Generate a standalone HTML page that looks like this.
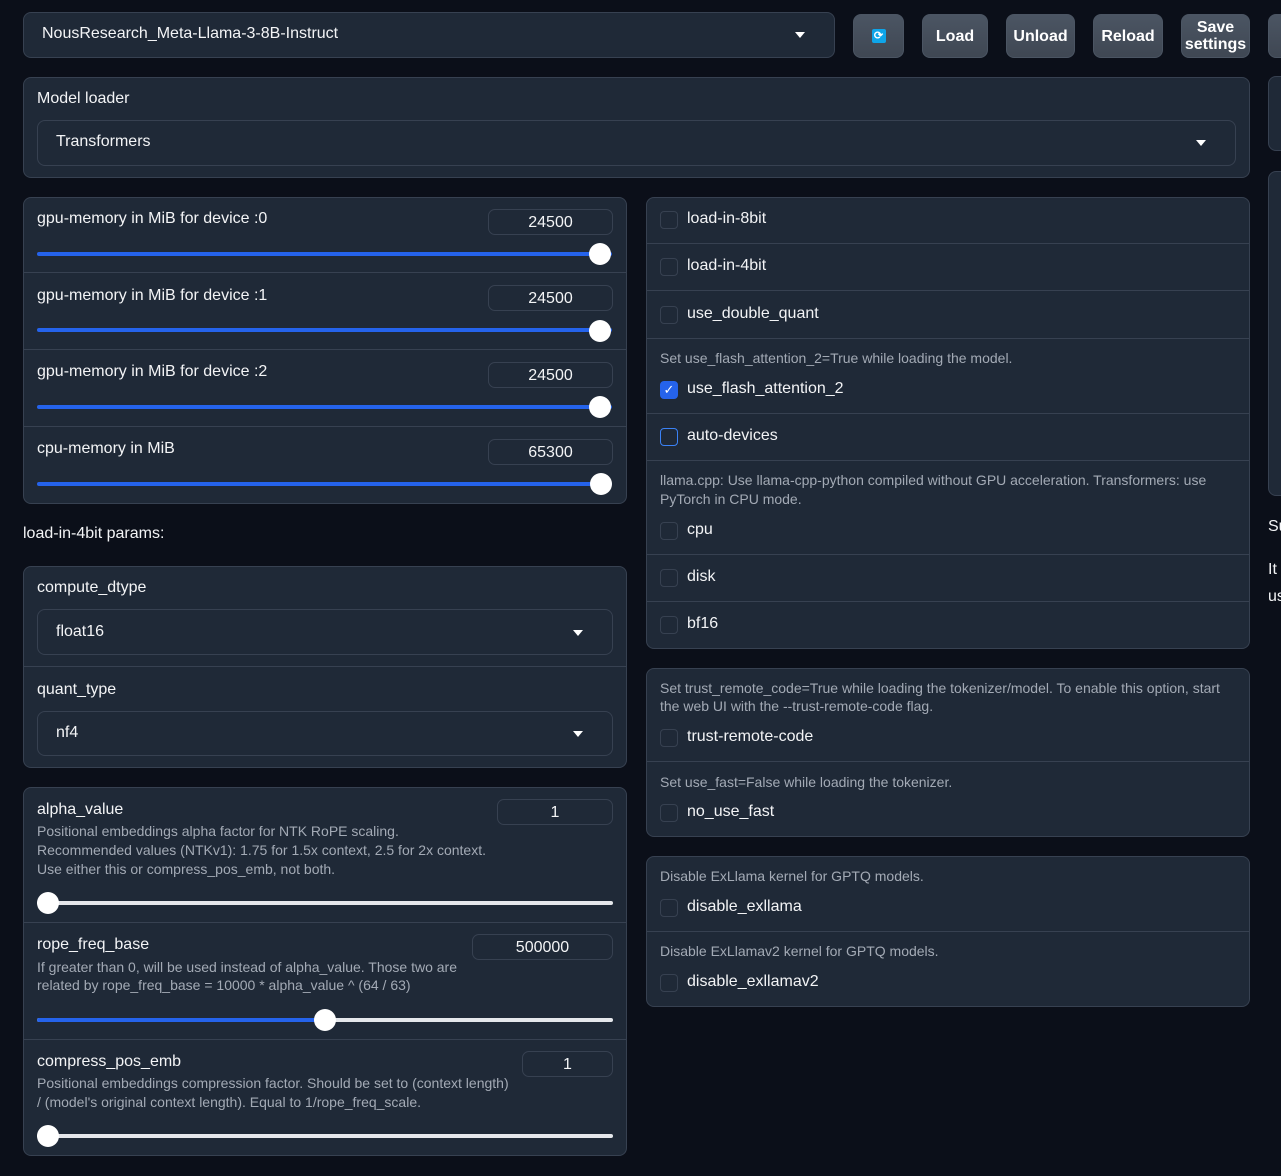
<!DOCTYPE html>
<html><head><meta charset="utf-8"><style>
*{box-sizing:border-box;margin:0;padding:0}
body{width:1281px;height:1176px;background:#0b0f19;position:relative;overflow:hidden;font-family:"Liberation Sans",sans-serif;color:#f3f4f6}
.a{position:absolute}
.p{position:absolute;background:#1f2937;border:1px solid #374151;border-radius:8px}
.in{position:absolute;background:#1f2937;border:1px solid #374151;border-radius:8px}
.t{position:absolute;white-space:nowrap;line-height:20px;font-size:16px;color:#f3f4f6}
.s{position:absolute;white-space:nowrap;line-height:19px;font-size:14px;color:#a3aab5}
.hr{position:absolute;height:1px;background:#374151}
.btn{position:absolute;top:14px;height:44px;border-radius:8px;background:linear-gradient(#4b5563,#3f4753);border:1px solid #4b5563;color:#fff;font-weight:bold;font-size:16px;display:flex;align-items:center;justify-content:center;text-align:center;line-height:17px}
.arr{position:absolute;width:0;height:0;border-left:5px solid transparent;border-right:5px solid transparent;border-top:6px solid #fff}
.cb{position:absolute;left:660px;width:18px;height:18px;border:1px solid #374151;border-radius:4px;background:#1f2937}
.num{position:absolute;border:1px solid #374151;border-radius:7px;height:26px;font-size:16px;text-align:center;line-height:26px;color:#f3f4f6}
.tr{position:absolute;height:4px;border-radius:2px;background:#e5e7eb}
.tb{position:absolute;height:4px;border-radius:2px;background:#2563eb}
.th{position:absolute;width:22px;height:22px;border-radius:50%;background:#fff}
</style></head><body>
<!-- top -->
<div class="in" style="left:23px;top:12px;width:812px;height:46px"></div>
<div class="t" style="left:42px;top:24px">NousResearch_Meta-Llama-3-8B-Instruct</div>
<div class="arr" style="left:795px;top:32px"></div>
<div class="btn" style="left:853px;width:51px"><div style="width:14px;height:14px;background:#0ea5e9;border-radius:2px;color:#fff;font-size:11px;line-height:14px">⟳</div></div>
<div class="btn" style="left:922px;width:66px">Load</div>
<div class="btn" style="left:1006px;width:69px">Unload</div>
<div class="btn" style="left:1093px;width:70px">Reload</div>
<div class="btn" style="left:1181px;width:69px">Save<br>settings</div>
<div class="btn" style="left:1268px;width:40px"></div>
<!-- right partial column -->
<div class="p" style="left:1268px;top:76px;width:40px;height:75px"></div>
<div class="p" style="left:1268px;top:171px;width:40px;height:325px"></div>
<div class="t" style="left:1268px;top:517px">Su</div>
<div class="t" style="left:1268px;top:560px">It</div>
<div class="t" style="left:1268px;top:587px">us</div>
<!-- model loader -->
<div class="p" style="left:23px;top:77px;width:1227px;height:101px"></div>
<div class="t" style="left:37px;top:89px">Model loader</div>
<div class="in" style="left:37px;top:120px;width:1199px;height:46px"></div>
<div class="t" style="left:56px;top:132px">Transformers</div>
<div class="arr" style="left:1196px;top:140px"></div>
<!-- memory sliders -->
<div class="p" style="left:23px;top:197px;width:604px;height:307px"></div>
<div class="hr" style="left:24px;top:272px;width:602px"></div>
<div class="hr" style="left:24px;top:349px;width:602px"></div>
<div class="hr" style="left:24px;top:426px;width:602px"></div>
<div class="t" style="left:37px;top:209px">gpu-memory in MiB for device :0</div>
<div class="num" style="left:488px;top:209px;width:125px">24500</div>
<div class="tb" style="left:37px;top:252px;width:575px"></div><div class="th" style="left:589px;top:243px"></div>
<div class="t" style="left:37px;top:286px">gpu-memory in MiB for device :1</div>
<div class="num" style="left:488px;top:285px;width:125px">24500</div>
<div class="tb" style="left:37px;top:328px;width:575px"></div><div class="th" style="left:589px;top:320px"></div>
<div class="t" style="left:37px;top:362px">gpu-memory in MiB for device :2</div>
<div class="num" style="left:488px;top:362px;width:125px">24500</div>
<div class="tb" style="left:37px;top:405px;width:575px"></div><div class="th" style="left:589px;top:396px"></div>
<div class="t" style="left:37px;top:439px">cpu-memory in MiB</div>
<div class="num" style="left:488px;top:439px;width:125px">65300</div>
<div class="tb" style="left:37px;top:482px;width:575px"></div><div class="th" style="left:590px;top:473px"></div>
<div class="t" style="left:23px;top:524px">load-in-4bit params:</div>
<!-- compute -->
<div class="p" style="left:23px;top:566px;width:604px;height:202px"></div>
<div class="t" style="left:37px;top:578px">compute_dtype</div>
<div class="in" style="left:37px;top:609px;width:576px;height:46px"></div>
<div class="t" style="left:56px;top:622px">float16</div>
<div class="arr" style="left:573px;top:630px"></div>
<div class="hr" style="left:24px;top:666px;width:602px"></div>
<div class="t" style="left:37px;top:680px">quant_type</div>
<div class="in" style="left:37px;top:711px;width:576px;height:45px"></div>
<div class="t" style="left:56px;top:723px">nf4</div>
<div class="arr" style="left:573px;top:731px"></div>
<!-- alpha -->
<div class="p" style="left:23px;top:787px;width:604px;height:369px"></div>
<div class="t" style="left:37px;top:800px">alpha_value</div>
<div class="num" style="left:497px;top:799px;width:116px">1</div>
<div class="s" style="left:37px;top:822px">Positional embeddings alpha factor for NTK RoPE scaling.</div>
<div class="s" style="left:37px;top:841px">Recommended values (NTKv1): 1.75 for 1.5x context, 2.5 for 2x context.</div>
<div class="s" style="left:37px;top:860px">Use either this or compress_pos_emb, not both.</div>
<div class="tr" style="left:37px;top:901px;width:576px"></div><div class="th" style="left:37px;top:892px"></div>
<div class="hr" style="left:24px;top:922px;width:602px"></div>
<div class="t" style="left:37px;top:935px">rope_freq_base</div>
<div class="num" style="left:472px;top:934px;width:141px">500000</div>
<div class="s" style="left:37px;top:958px">If greater than 0, will be used instead of alpha_value. Those two are</div>
<div class="s" style="left:37px;top:976px">related by rope_freq_base = 10000 * alpha_value ^ (64 / 63)</div>
<div class="tr" style="left:37px;top:1018px;width:576px"></div>
<div class="tb" style="left:37px;top:1018px;width:290px"></div><div class="th" style="left:314px;top:1009px"></div>
<div class="hr" style="left:24px;top:1039px;width:602px"></div>
<div class="t" style="left:37px;top:1052px">compress_pos_emb</div>
<div class="num" style="left:522px;top:1051px;width:91px">1</div>
<div class="s" style="left:37px;top:1074px">Positional embeddings compression factor. Should be set to (context length)</div>
<div class="s" style="left:37px;top:1093px">/ (model's original context length). Equal to 1/rope_freq_scale.</div>
<div class="tr" style="left:37px;top:1134px;width:576px"></div><div class="th" style="left:37px;top:1125px"></div>
<!-- checkbox panel -->
<div class="p" style="left:646px;top:197px;width:604px;height:452px"></div>
<div class="hr" style="left:647px;top:243px;width:602px"></div>
<div class="hr" style="left:647px;top:290px;width:602px"></div>
<div class="hr" style="left:647px;top:338px;width:602px"></div>
<div class="hr" style="left:647px;top:413px;width:602px"></div>
<div class="hr" style="left:647px;top:460px;width:602px"></div>
<div class="hr" style="left:647px;top:554px;width:602px"></div>
<div class="hr" style="left:647px;top:601px;width:602px"></div>
<div class="cb" style="top:211px"></div><div class="t" style="left:687px;top:209px">load-in-8bit</div>
<div class="cb" style="top:258px"></div><div class="t" style="left:687px;top:256px">load-in-4bit</div>
<div class="cb" style="top:306px"></div><div class="t" style="left:687px;top:304px">use_double_quant</div>
<div class="s" style="left:660px;top:349px">Set use_flash_attention_2=True while loading the model.</div>
<div class="cb" style="top:381px;background:#2563eb;border-color:#2563eb;color:#fff;font-size:13px;line-height:16px;text-align:center">✓</div><div class="t" style="left:687px;top:379px">use_flash_attention_2</div>
<div class="cb" style="top:428px;border-color:#3b82f6"></div><div class="t" style="left:687px;top:426px">auto-devices</div>
<div class="s" style="left:660px;top:471px">llama.cpp: Use llama-cpp-python compiled without GPU acceleration. Transformers: use</div>
<div class="s" style="left:660px;top:490px">PyTorch in CPU mode.</div>
<div class="cb" style="top:522px"></div><div class="t" style="left:687px;top:520px">cpu</div>
<div class="cb" style="top:569px"></div><div class="t" style="left:687px;top:567px">disk</div>
<div class="cb" style="top:616px"></div><div class="t" style="left:687px;top:614px">bf16</div>
<!-- trust panel -->
<div class="p" style="left:646px;top:668px;width:604px;height:169px"></div>
<div class="s" style="left:660px;top:679px">Set trust_remote_code=True while loading the tokenizer/model. To enable this option, start</div>
<div class="s" style="left:660px;top:697px">the web UI with the --trust-remote-code flag.</div>
<div class="cb" style="top:729px"></div><div class="t" style="left:687px;top:727px">trust-remote-code</div>
<div class="hr" style="left:647px;top:761px;width:602px"></div>
<div class="s" style="left:660px;top:773px">Set use_fast=False while loading the tokenizer.</div>
<div class="cb" style="top:804px"></div><div class="t" style="left:687px;top:802px">no_use_fast</div>
<!-- exllama -->
<div class="p" style="left:646px;top:856px;width:604px;height:151px"></div>
<div class="s" style="left:660px;top:867px">Disable ExLlama kernel for GPTQ models.</div>
<div class="cb" style="top:899px"></div><div class="t" style="left:687px;top:897px">disable_exllama</div>
<div class="hr" style="left:647px;top:931px;width:602px"></div>
<div class="s" style="left:660px;top:942px">Disable ExLlamav2 kernel for GPTQ models.</div>
<div class="cb" style="top:974px"></div><div class="t" style="left:687px;top:972px">disable_exllamav2</div>
</body></html>
